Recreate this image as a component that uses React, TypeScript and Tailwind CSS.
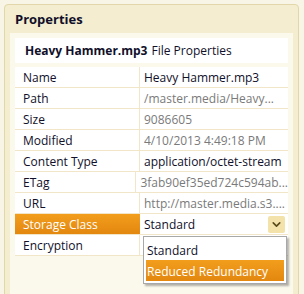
import { ChevronDown } from 'lucide-react';

const rows = [
  { label: 'Name', value: 'Heavy Hammer.mp3', dark: true },
  { label: 'Path', value: '/master.media/Heavy...' },
  { label: 'Size', value: '9086605' },
  { label: 'Modified', value: '4/10/2013 4:49:18 PM' },
  { label: 'Content Type', value: 'application/octet-stream', dark: true },
  { label: 'ETag', value: '3fab90ef35ed724c594ab...' },
  { label: 'URL', value: 'http://master.media.s3....' },
];

export default function App() {
  return (
    <div className="w-[304px] h-[294px] bg-[#f8f4e6] pl-1 pt-1 overflow-hidden text-[12px] text-[#10102a]" style={{ fontFamily: '"Open Sans", "DejaVu Sans", sans-serif' }}>
      <div className="w-[295px] h-[300px] bg-[#f5edcf] border border-[#e2d7aa] rounded-t-[4px]">
        {/* Header */}
        <div className="h-[28px] flex items-center pl-[10px] pt-[2px] font-bold text-[13px]">Properties</div>

        <div className="mx-[5px] bg-[#fbf8ec] h-[280px] px-[5px] pt-[5px]">
          {/* Title */}
          <div className="h-[25px] bg-white flex items-center pl-[10px] pt-[1px] gap-1">
            <span className="font-bold">Heavy Hammer.mp3</span>
            <span>File Properties</span>
          </div>

          {/* Table */}
          <div className="mt-[4px] bg-white">
            {rows.map((r) => (
              <div key={r.label} className="flex h-[21px] border-b border-[#f1e7c8]">
                <div className="w-[125px] pl-[8px] pt-[2px] flex items-center border-r border-[#f1e7c8]">{r.label}</div>
                <div className={`flex-1 pl-[4px] pt-[2px] flex items-center ${r.dark ? 'text-[#10102a]' : 'text-[#7a7a7a]'}`}>{r.value}</div>
              </div>
            ))}
            <div className="flex h-[21px] border-b border-[#f1e7c8]">
              <div className="w-[125px] pl-[8px] pt-[2px] flex items-center text-white bg-gradient-to-b from-[#f29e1c] to-[#e3870f]">Storage Class</div>
              <div className="flex-1 pl-[4px] pr-[3px] flex items-center justify-between">
                <span className="pt-[2px]">Standard</span>
                <span className="w-[17px] h-[17px] rounded-[2px] bg-[#f3e3ab] flex items-center justify-center">
                  <ChevronDown className="w-[13px] h-[13px] text-[#5a4a1a]" strokeWidth={3} />
                </span>
              </div>
            </div>
            <div className="flex h-[21px] border-b border-[#f1e7c8]">
              <div className="w-[125px] pl-[8px] pt-[2px] flex items-center border-r border-[#f1e7c8]">Encryption</div>
              <div className="flex-1 relative">
                <div className="absolute left-[3px] top-[1px] w-[144px] bg-white border border-[#a8a8a8] shadow-[2px_2px_2px_rgba(0,0,0,0.3)] px-[2px] pt-[3px] pb-[2px] z-10">
                  <div className="h-[20px] flex items-center pl-[1px] pt-[2px]">Standard</div>
                  <div className="h-[21px] flex items-center pl-[1px] pt-[2px] text-white bg-gradient-to-b from-[#f29e1c] to-[#e3870f]">Reduced Redundancy</div>
                </div>
              </div>
            </div>
          </div>
        </div>
      </div>
    </div>
  );
}
